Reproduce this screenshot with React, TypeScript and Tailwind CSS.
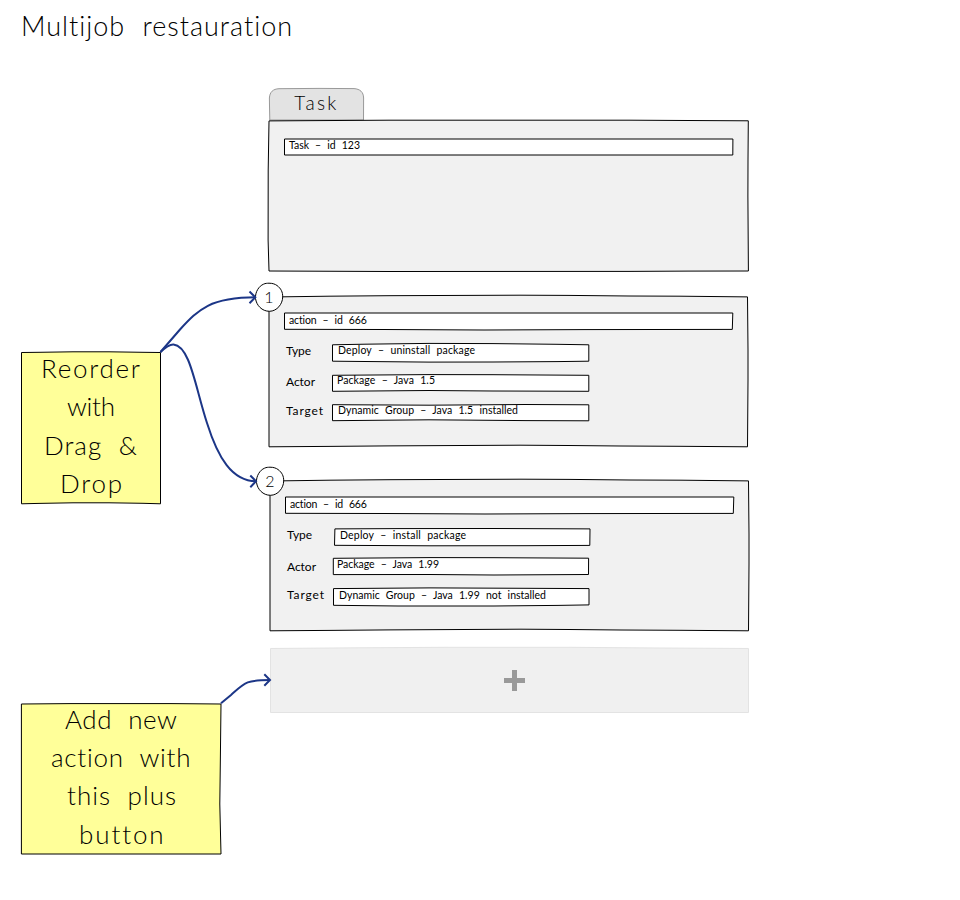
import { useLayoutEffect, useRef, useState, type ReactNode } from "react";

/* One line of text, tracked out so that it spans the given width. */
function Ink({ children, width, className = "" }: { children: string; width: number; className?: string }) {
  const ref = useRef<HTMLSpanElement>(null);
  const [tracking, setTracking] = useState(0);
  useLayoutEffect(() => {
    if (!ref.current) return;
    const natural = ref.current.getBoundingClientRect().width - tracking * children.length;
    setTracking((width - natural) / Math.max(1, children.length - 1));
  }, [children, width]);
  return (
    <span
      ref={ref}
      className={`relative block w-max shrink-0 whitespace-pre [word-spacing:0.33em] ${className}`}
      style={{ letterSpacing: `${tracking}px` }}
    >
      {children}
    </span>
  );
}

/* Slightly uneven hand-drawn outline behind a block's content. */
function Outline({ d, fill, stroke = "#000" }: { d: string; fill: string; stroke?: string }) {
  return (
    <svg className="pointer-events-none absolute inset-0 h-full w-full overflow-visible" aria-hidden="true">
      <path d={d} fill={fill} stroke={stroke} strokeWidth="1" />
    </svg>
  );
}

function Field({ d, text, width, className, pad = "pl-[5px]" }: { d: string; text: string; width: number; className: string; pad?: string }) {
  return (
    <div className={`relative ${pad} ${className}`}>
      <Outline d={d} fill="#fff" />
      <Ink width={width} className="text-[10.5px] leading-[12px]">{text}</Ink>
    </div>
  );
}

function Label({ text, width }: { text: string; width: number }) {
  return (
    <div className="w-[47px] shrink-0">
      <Ink width={width} className="text-[12px] leading-[14px]">{text}</Ink>
    </div>
  );
}

function Step({ n }: { n: string }) {
  return (
    <div className="absolute -left-[14px] -top-[13px] flex h-[28px] w-[28px] items-center justify-center">
      <Outline
        fill="#fff"
        d="M14 .2 C18 .2 20 1.2 22 2.5 C26 5.5 27.8 9 27.7 14 C27.6 21 22 28.2 14.5 28.3 C7 28.3 1.5 22.5 .5 15.5 C0 9 4 3 8.5 1.2 C10.5 .2 12 .3 14 .2Z"
      />
      <span className="relative text-[16px] font-light leading-[28px]">{n}</span>
    </div>
  );
}

const PANEL =
  "M0 1 L60 .2 L120 -.3 L251 -.8 L299 -.6 L360 0 L411 .2 L478.5 .9 L479 54 L479 84 L478.5 150.8 L411 150.3 L351 150 L299 149.5 L251 149.2 L119 149.9 L60 150.4 L0 150.8Z";
const WIDE = "M.5 1 L448.8 1 L448.3 17.4 L300 17.6 L200 18 L100 17.5 L.5 17.3Z";

function Panel({ className, children }: { className: string; children: ReactNode }) {
  return (
    <section className={`relative h-[151px] w-[479px] ${className}`}>
      <Outline d={PANEL} fill="#f1f1f1" />
      {children}
    </section>
  );
}

function NoteLine({ text, width, className }: { text: string; width: number; className: string }) {
  return (
    <div className={`flex h-[38px] items-start ${className}`}>
      <Ink width={width} className="text-[26px] font-light leading-[38px]">{text}</Ink>
    </div>
  );
}

function Arrows() {
  return (
    <svg
      className="pointer-events-none absolute left-0 top-0 h-[900px] w-[960px]"
      fill="none"
      stroke="#1c3687"
      strokeWidth="2"
      aria-hidden="true"
    >
      <path d="M160.5 352 Q170 341 180 329.5 C199 309 210 297.5 256 297.3" />
      <path d="M249.5 291.5 L255.3 297.3 L249.5 303.2" />
      <path d="M160.5 352 C168 345 171 344.3 173.5 344.5 C190 346 195 386 207 423 C218 458 232 481 256 481.3" />
      <path d="M250.3 475.5 L256 481.3 L250.3 487.2" />
      <path d="M221 703.3 L231 695 C245 682.5 245 680.2 270 680" />
      <path d="M264.3 674.3 L270 680 L264.3 685.8" />
    </svg>
  );
}

export default function App() {
  return (
    <div className="relative flex h-[900px] w-[960px] flex-col overflow-hidden bg-white font-['Lato','Liberation_Sans',sans-serif] text-black">
      <header className="h-[88px] pl-[21px] pt-[9px]">
        <h1 className="flex">
          <Ink width={272} className="text-[27px] font-light leading-[34px]">Multijob restauration</Ink>
        </h1>
      </header>

      <div className="flex">
        <aside className="w-[268px] shrink-0 pl-[21px] pt-[264px]">
          <div className="relative flex h-[152px] w-[140px] flex-col">
            <Outline
              fill="#ffff99"
              d="M.5 .5 L18 .3 L52 -.2 L88 -.2 L122 .3 L139.5 .5 L139.5 151.8 L122 151.3 L88 150.8 L52 150.8 L18 151.4 L.5 151.8Z"
            />
            <NoteLine text="Reorder" width={99} className="-mt-[3px] pl-[20px]" />
            <NoteLine text="with" width={48} className="pl-[46px]" />
            <NoteLine text="Drag &" width={93} className="mt-[1px] pl-[23px]" />
            <NoteLine text="Drop" width={62} className="pl-[39px]" />
          </div>

          <div className="relative mt-[200px] flex h-[150px] w-[200px] flex-col">
            <Outline
              fill="#ffff99"
              d="M.4 0 L50 -.4 L150 -.4 L200 0 L199.3 60 L198.8 100 L199.5 130 L200 150 L.4 150Z"
            />
            <NoteLine text="Add new" width={112} className="-mt-[4px] pl-[44px]" />
            <NoteLine text="action with" width={140} className="pl-[30px]" />
            <NoteLine text="this plus" width={109} className="pl-[46px]" />
            <NoteLine text="button" width={84} className="mt-[1px] pl-[58px]" />
          </div>
        </aside>

        <main>
          <div className="relative ml-[1px] flex h-[32px] w-[95px] justify-center pt-[4px]">
            <Outline
              fill="#e3e3e3"
              stroke="#999"
              d="M.8 32 L.5 18 L.4 10 C.8 4 4 1 10 .7 L50 .4 L85 .6 C91 1 94.5 4 94.6 10 L94.5 32Z"
            />
            <Ink width={42} className="text-[19px] font-light leading-[22px]">Task</Ink>
          </div>

          <section className="relative h-[151px] w-[480px] pl-[16px] pt-[18px]">
            <Outline
              fill="#f1f1f1"
              d="M1 .9 L121 .2 L361 .2 L420 .5 L480.3 .8 L480 40 L479.9 76 L480.4 151 L420 151.1 L361 151.4 L121 151.5 L1 151 L.1 120 L.2 50Z"
            />
            <Field
              d="M.5 1 L448.9 1 L448.8 17 L.5 17Z"
              text="Task – id 123"
              width={71}
              className="h-[18px] w-[449px] pt-[1px]"
            />
          </section>

          <Panel className="ml-[1px] mt-[25px] pl-[15px] pt-[16px]">
            <Step n="1" />
            <Field d={WIDE} text="action – id 666" width={78} className="h-[18px] w-[449px] pt-[2px]" />
            <div className="mt-[13px] flex pl-[2px]">
              <div className="pt-[1px]"><Label text="Type" width={25} /></div>
              <Field
                d="M-.5 1.8 L32 1.2 L96 .4 L160 .6 L224 1.3 L255.8 1.8 L255.8 18.2 L224 18.6 L160 19 L96 19.1 L32 18.5 L-.5 18.2Z"
                text="Deploy – uninstall package"
                width={137}
                className="h-[19px] w-[256px] pt-[1px]"
              />
            </div>
            <div className="mt-[12px] flex pl-[2px]">
              <div className="pt-[1px]"><Label text="Actor" width={29} /></div>
              <Field
                d="M-.5 1.3 L96 .6 L160 .7 L255.8 1.3 L255.8 17.3 L160 17 L96 16.5 L-.5 17.3Z"
                text="Package – Java 1.5"
                width={98}
                className="h-[17px] w-[256px]"
                pad="pl-[4px]"
              />
            </div>
            <div className="mt-[13px] flex pl-[2px]">
              <Label text="Target" width={37} />
              <Field
                d="M-.5 .7 L96 1.2 L192 .5 L255.8 .8 L255.8 16.8 L192 16.6 L96 15.8 L-.5 16.7Z"
                text="Dynamic Group – Java 1.5 installed"
                width={180}
                className="h-[17px] w-[256px]"
              />
            </div>
          </Panel>

          <Panel className="ml-[2px] mt-[33px] pl-[15px] pt-[16px]">
            <Step n="2" />
            <Field d={WIDE} text="action – id 666" width={77} className="h-[18px] w-[449px] pt-[2px]" />
            <div className="mt-[14px] flex pl-[2px]">
              <Label text="Type" width={25} />
              <Field
                d="M.9 .9 L64 .6 L160 .5 L256 .9 L255.8 17.4 L192 17.7 L96 17.8 L.5 17.3Z"
                text="Deploy – install package"
                width={126}
                className="h-[18px] w-[256px] pt-[1px]"
                pad="pl-[6px]"
              />
            </div>
            <div className="mt-[12px] flex pl-[2px]">
              <div className="pt-[2px]"><Label text="Actor" width={29} /></div>
              <Field
                d="M-.7 .3 L96 -.4 L160 -.3 L254.6 .2 L254.5 16.5 L160 17 L96 16.5 L-.7 16.6Z"
                text="Package – Java 1.99"
                width={102}
                className="h-[17px] w-[256px]"
                pad="pl-[3px]"
              />
            </div>
            <div className="mt-[13px] flex pl-[2px]">
              <Label text="Target" width={37} />
              <Field
                d="M-.5 .6 L96 -.1 L192 .3 L255 .6 L255 16.9 L224 17.4 L160 18 L64 18 L-.5 17.3Z"
                text="Dynamic Group – Java 1.99 not installed"
                width={207}
                className="h-[18px] w-[256px] pt-[1px]"
              />
            </div>
          </Panel>

          <button type="button" aria-label="+" className="relative ml-[2px] mt-[17px] flex h-[65px] w-[479px] items-center justify-center">
            <Outline
              fill="#f0f0f0"
              stroke="#e3e3e3"
              d="M.5 .5 L89 -.2 L178 -.7 L299 -.7 L389 0 L478.5 .5 L478.5 64.5 L.5 64.5Z"
            />
            <svg className="relative mr-[-10px] h-[21px] w-[21px]" viewBox="0 0 21 21" aria-hidden="true">
              <path d="M8 0H13V8H21V13H13V21H8V13H0V8H8Z" fill="#999" />
            </svg>
          </button>
        </main>
      </div>

      <Arrows />
    </div>
  );
}
